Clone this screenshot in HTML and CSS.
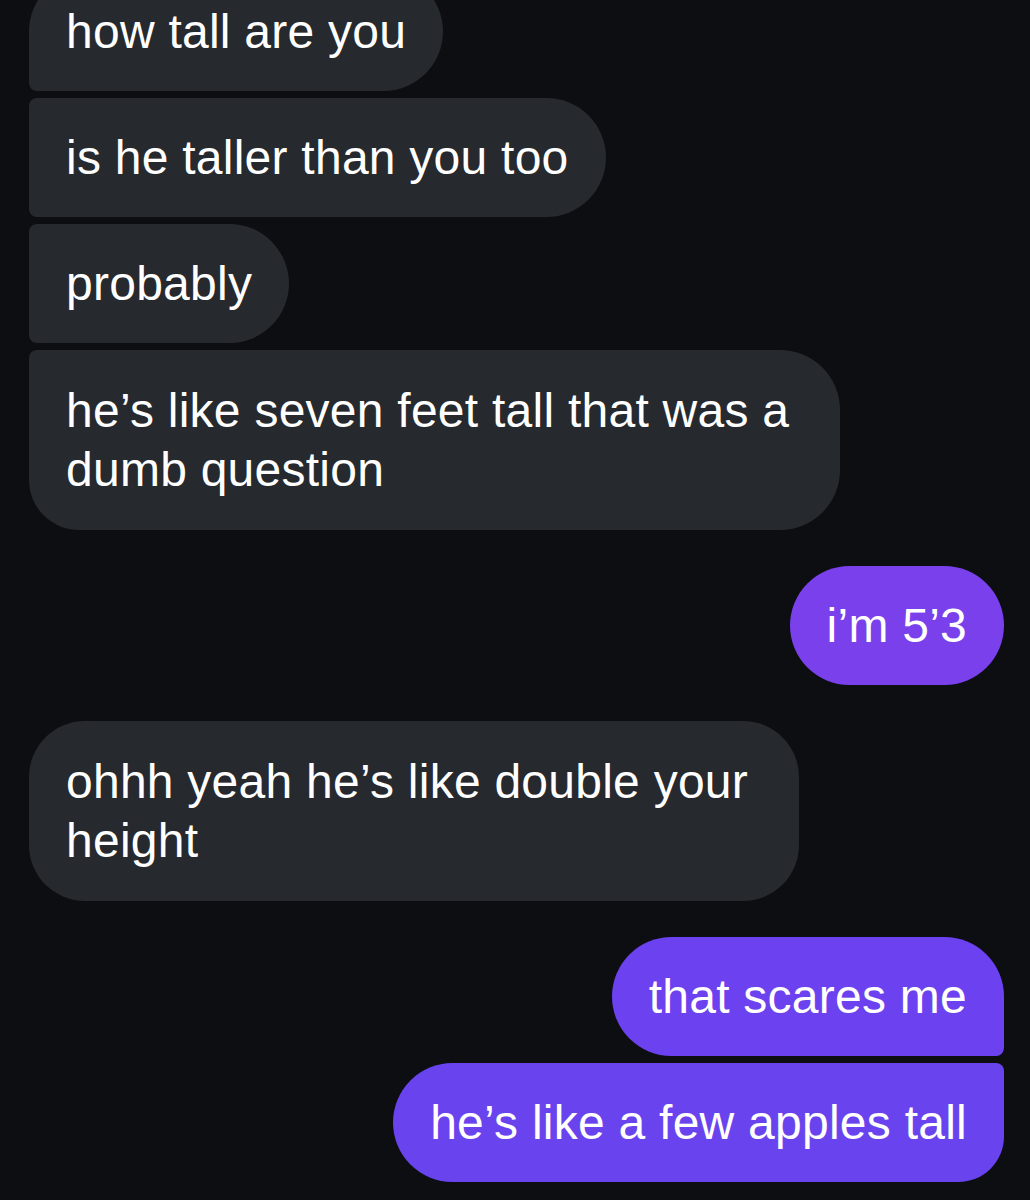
FILE: index.html
```html
<!DOCTYPE html>
<html lang="en">
<head>
<meta charset="utf-8">
<title>Chat</title>
<link rel="stylesheet" href="styles.css">
</head>
<body>
<main class="chat">
  <section class="group group-in">
    <div class="bubble in mid-top">how tall are you</div>
    <div class="bubble in mid">is he taller than you too</div>
    <div class="bubble in mid">probably</div>
    <div class="bubble in last multi">he’s like seven feet tall that was a<br>dumb question</div>
  </section>
  <section class="group group-out">
    <div class="bubble out solo c1">i’m 5’3</div>
  </section>
  <section class="group group-in">
    <div class="bubble in solo multi">ohhh yeah he’s like double your<br>height</div>
  </section>
  <section class="group group-out">
    <div class="bubble out first c2">that scares me</div>
    <div class="bubble out last c3">he’s like a few apples tall</div>
  </section>
</main>
</body>
</html>
```
FILE: styles.css
```css
html, body {
  margin: 0;
  padding: 0;
  background: #0c0e12;
}

body {
  width: 1030px;
  height: 1200px;
  overflow: hidden;
  font-family: "Liberation Sans", Arial, sans-serif;
}

.chat {
  display: flex;
  flex-direction: column;
  gap: 36px;
  margin-top: -28px;
  padding: 0 26px 0 29px;
}

.group {
  display: flex;
  flex-direction: column;
  gap: 7px;
}

.group-in { align-items: flex-start; }
.group-out { align-items: flex-end; }

.bubble {
  box-sizing: border-box;
  font-size: 48px;
  line-height: 59px;
  letter-spacing: 0.25px;
  color: #ffffff;
  padding: 30px 37px;
  border-radius: 60px;
  white-space: nowrap;
}

.bubble.multi {
  padding: 31px 51px 31px 37px;
  border-radius: 60px;
}

.in { background: #26292e; }
.out { background: #6c42ef; }

.c1 { background: #7940ec; }
.c2 { background: #6c41ef; }
.c3 { background: #6944ee; }

/* received grouping */
.in.mid-top { border-radius: 60px 60px 60px 8px; }
.in.mid { border-radius: 8px 60px 60px 8px; }
.in.last { border-radius: 8px 60px 60px 50px; }
.in.solo.multi { border-radius: 56px; }

/* sent grouping */
.out.first { border-radius: 60px 60px 8px 60px; }
.out.last { border-radius: 60px 8px 46px 60px; }
```
